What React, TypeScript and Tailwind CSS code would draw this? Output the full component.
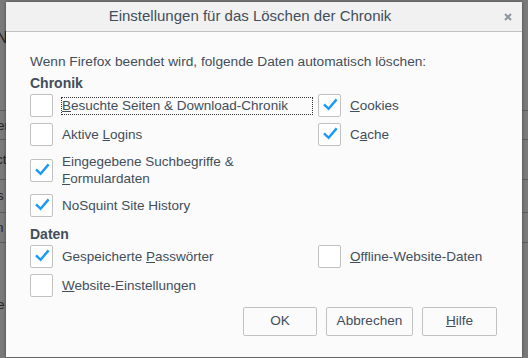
import type { ReactNode } from 'react'

function Box({ checked }: { checked?: boolean }) {
  return (
    <span className="flex h-[23px] w-[23px] shrink-0 items-center justify-center rounded-[2px] border border-[#c1c1c1] bg-white">
      {checked && (
        <svg width="21" height="21" viewBox="1 1 21 21">
          <path d="M6 10.3 L10.6 14.8 L18.6 5.4" fill="none" stroke="#1a9af5" strokeWidth="2.4" />
        </svg>
      )}
    </span>
  )
}

function Row({ checked, focus, children }: { checked?: boolean; focus?: boolean; children: ReactNode }) {
  return (
    <div className="flex min-h-[23px] items-center gap-[8px]">
      <Box checked={checked} />
      <span
        className={
          focus
            ? 'w-[252px] border border-dotted border-[#333] leading-[16px]'
            : 'border border-transparent leading-[17px]'
        }
      >
        {children}
      </span>
    </div>
  )
}

function Btn({ w, children }: { w: string; children: ReactNode }) {
  return (
    <button className={`h-[29px] ${w} rounded-[2px] border border-[#c1c1c1] bg-[#fbfbfb] text-[13.6px] text-[#424e5a]`}>
      {children}
    </button>
  )
}

export default function App() {
  return (
    <div className="relative h-[358px] w-[528px] overflow-hidden bg-[#7a7a7a] font-['Liberation_Sans',Arial,sans-serif] text-[13.5px] text-[#424e5a]">
      {/* dimmed preferences page behind the dialog */}
      <div className="flex flex-col text-[#262626]">
        <div className="h-[111px] border-b border-[#5c5c5c] pt-[26px] text-[16px]">
          <span className="-ml-[4px]">N</span>
        </div>
        <div className="h-[29px] border-b border-[#5c5c5c] pt-[5px]">
          <span className="-ml-[3px]">er</span>
        </div>
        <div className="h-[40px] border-b border-[#5c5c5c] pt-[10px]">
          <span className="-ml-[4px]">ct</span>
        </div>
        <div className="h-[33px] border-b border-[#5c5c5c] pt-[6px]">
          <span className="-ml-[3px]">s</span>
        </div>
        <div className="h-[30px] border-b border-[#5c5c5c] pt-[5px]">
          <span className="-ml-[4px]">n</span>
        </div>
        <div className="h-[70px] pt-[52px]">
          <span className="-ml-[3px]">e</span>
        </div>
      </div>

      {/* dialog */}
      <div className="absolute left-[6px] top-[2px] flex h-[355px] w-[516px] flex-col bg-[#fbfbfb] shadow-[0_0_3px_rgba(0,0,0,0.45)]">
        <div className="flex h-[30px] items-center border-b border-[#c1c1c1] bg-[#f1f1f1]">
          <div className="flex-1 text-center text-[15px]">Einstellungen für das Löschen der Chronik</div>
          <div className="flex w-[28px] items-center justify-center">
            <svg width="8" height="8" viewBox="0 0 8 8">
              <path d="M1 1 L7 7 M7 1 L1 7" stroke="#8e959c" strokeWidth="2" />
            </svg>
          </div>
        </div>

        <div className="flex flex-col px-[24px] pt-[21px]">
          <p className="text-[13.7px] leading-[18px]">
            Wenn Firefox beendet wird, folgende Daten automatisch löschen:
          </p>
          <h3 className="mt-[4px] text-[14px] font-bold leading-[16px]">Chronik</h3>
          <div className="mt-[3px] grid grid-cols-[288px_1fr]">
            <div className="flex flex-col gap-[6px]">
              <Row focus>
                <u>B</u>esuchte Seiten &amp; Download-Chronik
              </Row>
              <Row>
                Aktive <u>L</u>ogins
              </Row>
              <Row checked>
                Eingegebene Suchbegriffe &amp;
                <br />
                <u>F</u>ormulardaten
              </Row>
              <Row checked>NoSquint Site History</Row>
            </div>
            <div className="flex flex-col gap-[6px]">
              <Row checked>
                <u>C</u>ookies
              </Row>
              <Row checked>
                C<u>a</u>che
              </Row>
            </div>
          </div>

          <h3 className="mt-[9px] text-[14px] font-bold leading-[16px]">Daten</h3>
          <div className="mt-[3px] grid grid-cols-[288px_1fr]">
            <div className="flex flex-col gap-[6px]">
              <Row checked>
                Gespeicherte <u>P</u>asswörter
              </Row>
              <Row>
                <u>W</u>ebsite-Einstellungen
              </Row>
            </div>
            <div className="flex flex-col gap-[6px]">
              <Row>
                <u>O</u>ffline-Website-Daten
              </Row>
            </div>
          </div>

          <div className="mr-px mt-[10px] flex justify-end gap-[9px]">
            <Btn w="w-[74px]">OK</Btn>
            <Btn w="w-[87px]">Abbrechen</Btn>
            <Btn w="w-[75px]">
              <u>H</u>ilfe
            </Btn>
          </div>
        </div>
      </div>
    </div>
  )
}
